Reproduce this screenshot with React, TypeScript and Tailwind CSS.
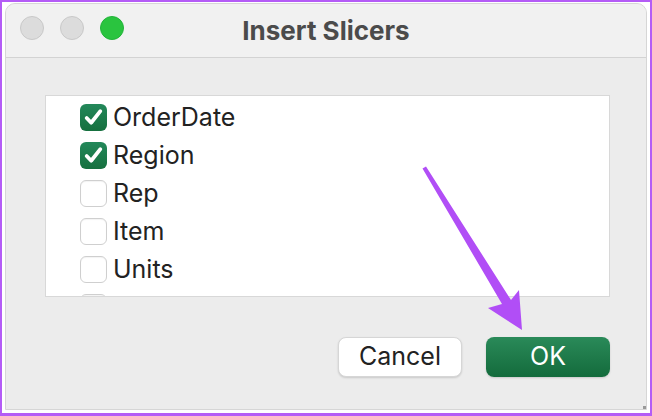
import React from "react";

const fields = [
  { name: "OrderDate", checked: true },
  { name: "Region", checked: true },
  { name: "Rep", checked: false },
  { name: "Item", checked: false },
  { name: "Units", checked: false },
  { name: "", checked: false },
];

function Checkbox({ checked }: { checked: boolean }) {
  if (checked) {
    return (
      <span className="flex h-[27px] w-[27px] shrink-0 items-center justify-center rounded-[6px] bg-gradient-to-b from-[#23885a] to-[#16703f]">
        <svg width="21" height="21" viewBox="0 0 20 20" fill="none">
          <path d="M3.5 10.5 L7.8 15 L16.5 4" stroke="white" strokeWidth="3.6" strokeLinecap="round" strokeLinejoin="round" />
        </svg>
      </span>
    );
  }
  return <span className="h-[27px] w-[27px] shrink-0 rounded-[6px] border border-[#cfcfcf] bg-white shadow-[inset_0_1px_1px_rgba(0,0,0,0.05)]" />;
}

export default function App() {
  return (
    <div
      className="relative h-[416px] w-[652px] overflow-hidden border-x-2 border-t-2 border-b-[3px] border-[#b45cf6] bg-white pb-[3px] pl-[3px] pr-[3px] pt-[1px]"
      style={{ fontFamily: "Inter, 'Liberation Sans', sans-serif" }}
    >
      <div className="flex h-full flex-col overflow-hidden rounded-t-[10px] border border-[#d6d6d6] bg-[#ececec]">
        {/* title bar */}
        <div className="relative flex h-[54px] shrink-0 items-center border-b border-[#d3d3d3] bg-[#f1f1f1]">
          <div className="absolute left-[14px] top-[12px] flex gap-[16px]">
            <span className="h-[24px] w-[24px] rounded-full border border-[#c9c9c9] bg-[#dcdcdc]" />
            <span className="h-[24px] w-[24px] rounded-full border border-[#c9c9c9] bg-[#dcdcdc]" />
            <span className="h-[24px] w-[24px] rounded-full border border-[#22b43a] bg-[#2ac43f]" />
          </div>
          <div className="w-full text-center text-[26px] font-bold leading-none text-[#4b4b4b]">Insert Slicers</div>
        </div>

        {/* content */}
        <div className="flex flex-1 flex-col pl-[39px] pr-[36px] pt-[37px]">
          <div className="h-[202px] overflow-hidden border border-[#d8d8d8] bg-white pl-[34px] pt-[2px]">
            {fields.map((f, i) => (
              <div key={i} className="flex h-[38px] items-center gap-[6px]">
                <Checkbox checked={f.checked} />
                <span className="text-[25px] leading-none text-[#222]">{f.name}</span>
              </div>
            ))}
          </div>

          <div className="mt-[40px] flex justify-end gap-[24px]">
            <button className="h-[40px] w-[124px] rounded-[8px] border border-[#d6d6d6] bg-white text-[25px] text-[#222] shadow-[0_1px_2px_rgba(0,0,0,0.15)]">
              Cancel
            </button>
            <button className="h-[40px] w-[124px] rounded-[8px] bg-gradient-to-b from-[#2a8a59] to-[#136b3c] text-[25px] text-white shadow-[0_1px_2px_rgba(0,0,0,0.15)]">
              OK
            </button>
          </div>
        </div>
      </div>

      {/* annotation arrow */}
      <svg className="pointer-events-none absolute left-0 top-0" width="652" height="416" viewBox="0 0 652 416">
        <path d="M420.5 166.5 L424 164.5 L509 298 L517 288 L520 328 L486 306 L500 302 Z" fill="#b14ef6" strokeLinejoin="round" />
      </svg>

      {/* resize grip */}
      <span className="absolute bottom-[4px] right-[4px] h-[3px] w-[3px] bg-[#9a9a9a]" />
    </div>
  );
}
